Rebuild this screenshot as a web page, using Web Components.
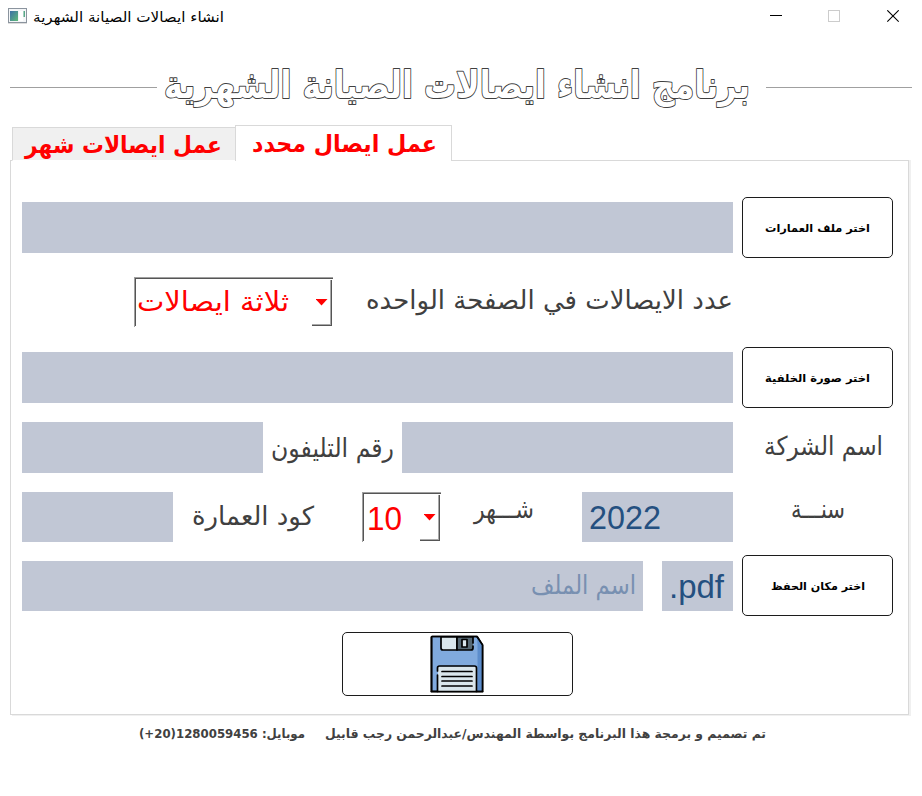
<!DOCTYPE html>
<html lang="ar">
<head>
<meta charset="utf-8">
<title>انشاء ايصالات الصيانة الشهرية</title>
<style>
html,body{margin:0;background:#fff;overflow:hidden}
body{width:922px;height:796px;font-family:"DejaVu Sans","Liberation Sans",sans-serif}
</style>
</head>
<body>
<receipt-app></receipt-app>
<script>
const define=(name,html)=>customElements.define(name,class extends HTMLElement{
  connectedCallback(){
    if(this.shadowRoot)return;
    const t=document.createElement('template');
    t.innerHTML=typeof html==='function'?html(this):html;
    this.attachShadow({mode:'open'}).append(t.content.cloneNode(true));
  }
});
const a=(e,n,d)=>e.getAttribute(n)??d;

/* A line of text fitted to width w, with its baseline at y = base. */
define('fit-text',e=>{
  const w=+a(e,'w'),h=a(e,'h',20),outline=e.hasAttribute('outline');
  return `<style>:host{display:block;flex:none;width:${w}px;height:${h}px}
  svg{display:block;overflow:visible}
  text{font:${a(e,'weight','400')} ${a(e,'size','16')}px ${a(e,'font','"DejaVu Sans"')},sans-serif;fill:${a(e,'color','#404040')};direction:${a(e,'dir2','rtl')};white-space:pre;
  ${outline?'fill:#fff;stroke:#404040;stroke-width:2px;paint-order:stroke;stroke-linejoin:round':''}}</style>
  <svg width="${w}" height="${h}"><text x="${w/2}" y="${a(e,'base')}" text-anchor="middle" textLength="${w}" lengthAdjust="spacingAndGlyphs">${e.textContent}</text></svg>`;
});

define('window-bar',`<style>:host{display:flex;height:32px;padding:0 23px 0 8px;align-items:flex-start}
.ic{margin-top:8px;margin-right:6px;flex:none}.sp{flex:1}.c{flex:none;margin-top:10px}</style>
<svg class="ic" width="19" height="16"><defs><linearGradient id="g" x2="1" y2="1"><stop stop-color="#3c6fa8"/><stop offset="1" stop-color="#5fbb78"/></linearGradient></defs>
<rect x=".5" y=".5" width="18" height="14" fill="#f4f6f8" stroke="#8b949e"/><rect x="2" y="3" width="8" height="10" fill="url(#g)"/><rect x="11" y="3" width="4" height="10" fill="#fff"/><rect x="15.500" y="3" width="1.500" height="6" fill="#58a887"/><path d="M0 15.500h19" stroke="#ddd"/></svg>
<slot></slot><div class="sp"></div>
<svg class="c" width="129" height="13"><path d="M0 5.500h12" stroke="#000"/><rect x="58.500" y=".5" width="11" height="11" fill="none" stroke="#ccc"/><path d="M117.300.3l11.400 11.400M128.700.3l-11.400 11.400" stroke="#000" stroke-width="1.100"/></svg>`);

define('title-rule',`<style>:host{display:flex;align-items:flex-start;height:93px;padding:0 10px}
i{height:1px;background:#a0a0a0;margin-top:55px}i.l{width:147px;margin-right:7px}i.r{flex:1;margin-left:16px}</style>
<i class="l"></i><slot></slot><i class="r"></i>`);

define('tab-strip',`<style>:host{display:flex;align-items:flex-end;height:36px;padding-left:12px;position:relative;z-index:1;margin-bottom:-1px}
div{box-sizing:border-box;border:1px solid #d9d9d9;border-bottom:0}
.o{width:223px;height:34px;background:#f0f0f0;border-right:0;padding-left:12px;border-bottom:1px solid #fff}
.n{width:217px;height:36px;background:#fff;padding-left:16px}</style>
<div class="o"><slot name="idle"></slot></div><div class="n"><slot name="active"></slot></div>`);

define('tab-panel',`<style>:host{display:grid;grid-template-rows:80px 70px 75px 70px 63px 77px 64px;box-sizing:border-box;margin-left:10px;width:899px;height:555px;border:1px solid #d9d9d9;padding:36px 0 0 11px;box-shadow:2px 0 #f0f0f0,2px 1px #f0f0f0}</style><slot></slot>`);

define('form-row',`<style>:host{display:flex;align-items:flex-start;box-sizing:border-box}</style><slot></slot>`);
define('x-gap',e=>`<style>:host{flex:none;width:${a(e,'w')}px}</style>`);

define('text-field',e=>`<style>:host{display:block;box-sizing:border-box;flex:none;background:#c1c7d5;width:${a(e,'w')}px;height:${a(e,'h',51)}px;margin-top:${a(e,'t',0)}px;padding-left:${a(e,'p',0)}px}</style><slot></slot>`);

define('push-button',e=>`<style>:host{display:flex;align-items:center;justify-content:center;box-sizing:border-box;flex:none;border:1px solid #1c1c1c;border-radius:5px;background:#fff;width:${a(e,'w',151)}px;height:${a(e,'h',61)}px}</style><slot></slot>`);

define('combo-box',e=>`<style>:host{display:flex;box-sizing:border-box;flex:none;width:${a(e,'w')}px;height:50px;border:solid #a0a0a0;border-width:1px 0 0 1px}
.in{flex:1;display:flex;justify-content:space-between;border:solid #555;border-width:1px 0 0 1px;height:48px;box-sizing:border-box;padding-left:${a(e,'p',1)}px}
.b{box-sizing:border-box;flex:none;width:20px;height:46px;margin-right:1px;border:solid #555;border-width:0 1px 1px 0;box-shadow:inset -1px -1px #a9a9a9;margin-top:1px}
svg{display:block;margin:19px 0 0 4px}</style><div class="in"><slot></slot><div class="b"><svg width="12" height="7"><path d="M-.5 0H11.500L5.500 6.500z" fill="red"/></svg></div></div>`);

define('floppy-icon',`<style>:host{display:block;margin-left:-1px}svg{display:block}</style>
<svg width="54" height="58" stroke="#000" stroke-width="1.700" stroke-linejoin="round" stroke-linecap="round">
<path d="M2 1.500H47L52.500 10V56.500H1.500V2z" fill="#80aade"/><path d="M47.500 10v46h5V10L47 3z" fill="#5c8dcc" stroke="none"/>
<path d="M2 1.500H47L52.500 10V56.500H1.500V2z" fill="none"/>
<path d="M11 2h16v13H13q-2 0-2-2z" fill="#dae6ec"/><path d="M27 2h16v11q0 2-2 2H27z" fill="#566874" stroke="none"/><path d="M27 2h16v6M43 11v2q0 2-2 2H27V2" fill="none"/>
<rect x="32" y="4.500" width="5" height="7.500" fill="#dae6ec"/>
<path d="M8 31.500h38v25H8z" fill="#dae6ec" stroke="none"/>
<path d="M7.500 36v-3q0-2 2-2h35q2 0 2 2v23.500M7.500 40v16.500M12 36.500h30M12 41.500h30M12 46h30M12 51h30" fill="none"/><path d="M1.500 56.500h51"/></svg>`);

define('receipt-app',`<style>:host{display:block;width:922px;height:796px;background:#fff}
.f{display:flex;padding-left:139px;height:30px}</style>
<window-bar><fit-text w="191" h="30" base="22" size="14" color="#000">انشاء ايصالات الصيانة الشهرية</fit-text></window-bar>
<title-rule><fit-text w="586" h="80" base="66" size="38" weight="700" outline>برنامج انشاء ايصالات الصيانة الشهرية</fit-text></title-rule>
<tab-strip><fit-text slot="idle" w="197" h="30" base="25" size="23.500" weight="700" color="#f00">عمل ايصالات شهر</fit-text><fit-text slot="active" w="185" h="30" base="26" size="23.500" weight="700" color="#f00">عمل ايصال محدد</fit-text></tab-strip>
<tab-panel>
<form-row><text-field w="711" t="5"></text-field><x-gap w="9"></x-gap><push-button><fit-text w="105" h="20" base="14" size="11" weight="700" color="#000">اختر ملف العمارات</fit-text></push-button></form-row>
<form-row><x-gap w="112"></x-gap><combo-box w="199"><fit-text w="152" h="40" base="32" size="27" color="#f00">ثلاثة ايصالات</fit-text></combo-box><x-gap w="33"></x-gap><fit-text w="367" h="40" base="32" size="26">عدد الايصالات في الصفحة الواحده</fit-text></form-row>
<form-row><text-field w="711" t="5"></text-field><x-gap w="9"></x-gap><push-button><fit-text w="105" h="20" base="14" size="11" weight="700" color="#000">اختر صورة الخلفية</fit-text></push-button></form-row>
<form-row><text-field w="241"></text-field><x-gap w="8"></x-gap><fit-text w="123" h="40" base="35" size="26">رقم التليفون</fit-text><x-gap w="8"></x-gap><text-field w="331"></text-field><x-gap w="31"></x-gap><fit-text w="119" h="40" base="33" size="26">اسم الشركة</fit-text></form-row>
<form-row><text-field w="151" h="50"></text-field><x-gap w="19"></x-gap><fit-text w="122" h="40" base="33" size="26">كود العمارة</fit-text><x-gap w="48"></x-gap><combo-box w="79" p="3"><fit-text w="35" h="40" base="36" size="33" font="'Liberation Sans'" color="#f00" dir2="ltr">10</fit-text></combo-box><x-gap w="33"></x-gap><fit-text w="60" h="40" base="26" size="26">شـــهر</fit-text><x-gap w="48"></x-gap><text-field w="151" h="50" p="7"><fit-text w="72" h="40" base="37" size="33" font="'Liberation Sans'" color="#245080" dir2="ltr">2022</fit-text></text-field><x-gap w="58"></x-gap><fit-text w="54" h="40" base="26" size="26">سنـــة</fit-text></form-row>
<form-row><text-field w="621" h="50" t="6" p="509"><fit-text w="105" h="40" base="33" size="26" color="#7890b1">اسم الملف</fit-text></text-field><x-gap w="19"></x-gap><text-field w="71" h="50" t="6" p="7"><fit-text w="55" h="40" base="37" size="33" font="'Liberation Sans'" color="#245080" dir2="ltr">.pdf</fit-text></text-field><x-gap w="9"></x-gap><push-button><fit-text w="94" h="20" base="14" size="11" weight="700" color="#000">اختر مكان الحفظ</fit-text></push-button></form-row>
<form-row><x-gap w="320"></x-gap><push-button w="231" h="64"><floppy-icon></floppy-icon></push-button></form-row>
</tab-panel>
<div class="f"><fit-text w="166" h="30" base="23" size="12.500" weight="700">موبايل: 1280059456(20+)</fit-text><x-gap w="20"></x-gap><fit-text w="441" h="30" base="23" size="12.500" weight="700">تم تصميم و برمجة هذا البرنامج بواسطة المهندس/عبدالرحمن رجب قابيل</fit-text></div>`);
</script>
</body>
</html>
